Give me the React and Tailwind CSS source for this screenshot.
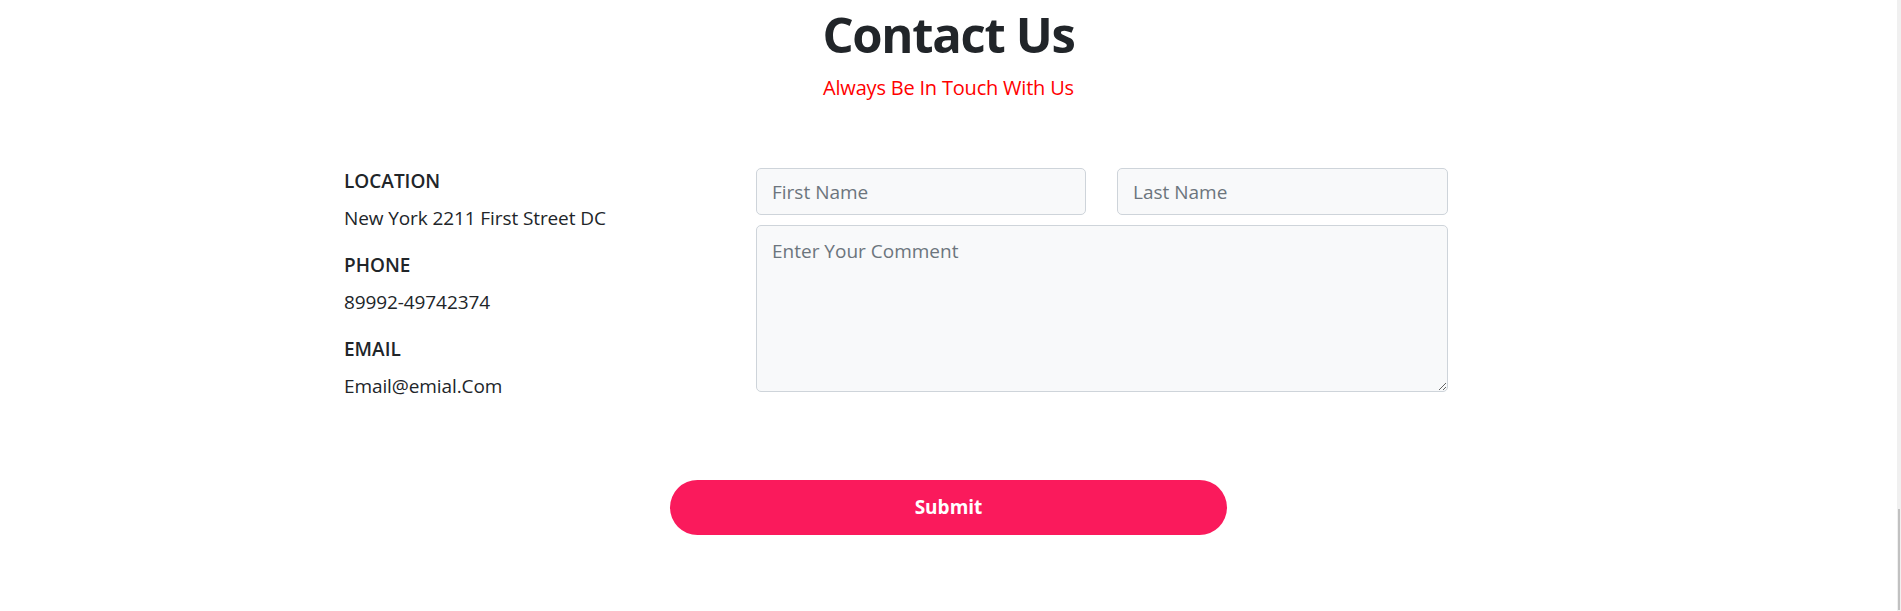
export default function App() {
  const items = [
    ["LOCATION", "New York 2211 First Street DC"],
    ["PHONE", "89992-49742374"],
    ["EMAIL", "Email@emial.Com"],
  ];
  return (
    <div
      className="relative w-full h-[611px] bg-white text-[#212529] overflow-hidden"
      style={{ fontFamily: '"Open Sans", "Noto Sans", sans-serif' }}
    >
      <div className="pr-[4px]">
        <div className="text-center pt-[4px]">
          <h1 className="text-[49px] leading-[60px] font-bold tracking-[-1.3px]">Contact Us</h1>
          <p className="mt-[9px] text-[20px] leading-[30px] font-medium tracking-[-0.2px] text-[#ff0000]">
            Always Be In Touch With Us
          </p>
        </div>

        <div className="flex items-start mt-[62px] pl-[344px]">
          <div className="w-[412px] flex flex-col pt-[1px]">
            {items.map(([label, value], i) => (
              <div key={label} className={i > 0 ? "mt-[17px]" : ""}>
                <div className="text-[19px] leading-[30px] font-semibold">{label}</div>
                <div className="mt-[7px] text-[19px] leading-[30px] tracking-[-0.1px]">{value}</div>
              </div>
            ))}
          </div>
          <div className="w-[692px] flex flex-col gap-[10px] pt-[3px]">
            <div className="flex gap-[31px]">
              <input
                className="w-[330px] h-[47px] px-[15px] rounded-[5px] border border-[#ced4da] bg-[#f8f9fa] text-[19px] placeholder:text-[#6c757d] outline-none"
                placeholder="First Name"
              />
              <input
                className="w-[331px] h-[47px] px-[15px] rounded-[5px] border border-[#ced4da] bg-[#f8f9fa] text-[19px] placeholder:text-[#6c757d] outline-none"
                placeholder="Last Name"
              />
            </div>
            <textarea
              className="block w-[692px] h-[167px] px-[15px] py-[10px] rounded-[5px] border border-[#ced4da] bg-[#f8f9fa] text-[19px] leading-[30px] placeholder:text-[#6c757d] outline-none"
              placeholder="Enter Your Comment"
            />
          </div>
        </div>

        <div className="mt-[79px] flex justify-center">
          <button className="w-[557px] h-[55px] rounded-full bg-[#fa1a5c] text-white text-[19px] font-bold">
            Submit
          </button>
        </div>
      </div>

      <div className="absolute top-0 right-0 w-[4px] h-full bg-[#f0f0f0]">
        <div className="absolute top-[509px] bottom-[1px] left-[1px] w-[2px] bg-[#c1c1c1]" />
      </div>
    </div>
  );
}
